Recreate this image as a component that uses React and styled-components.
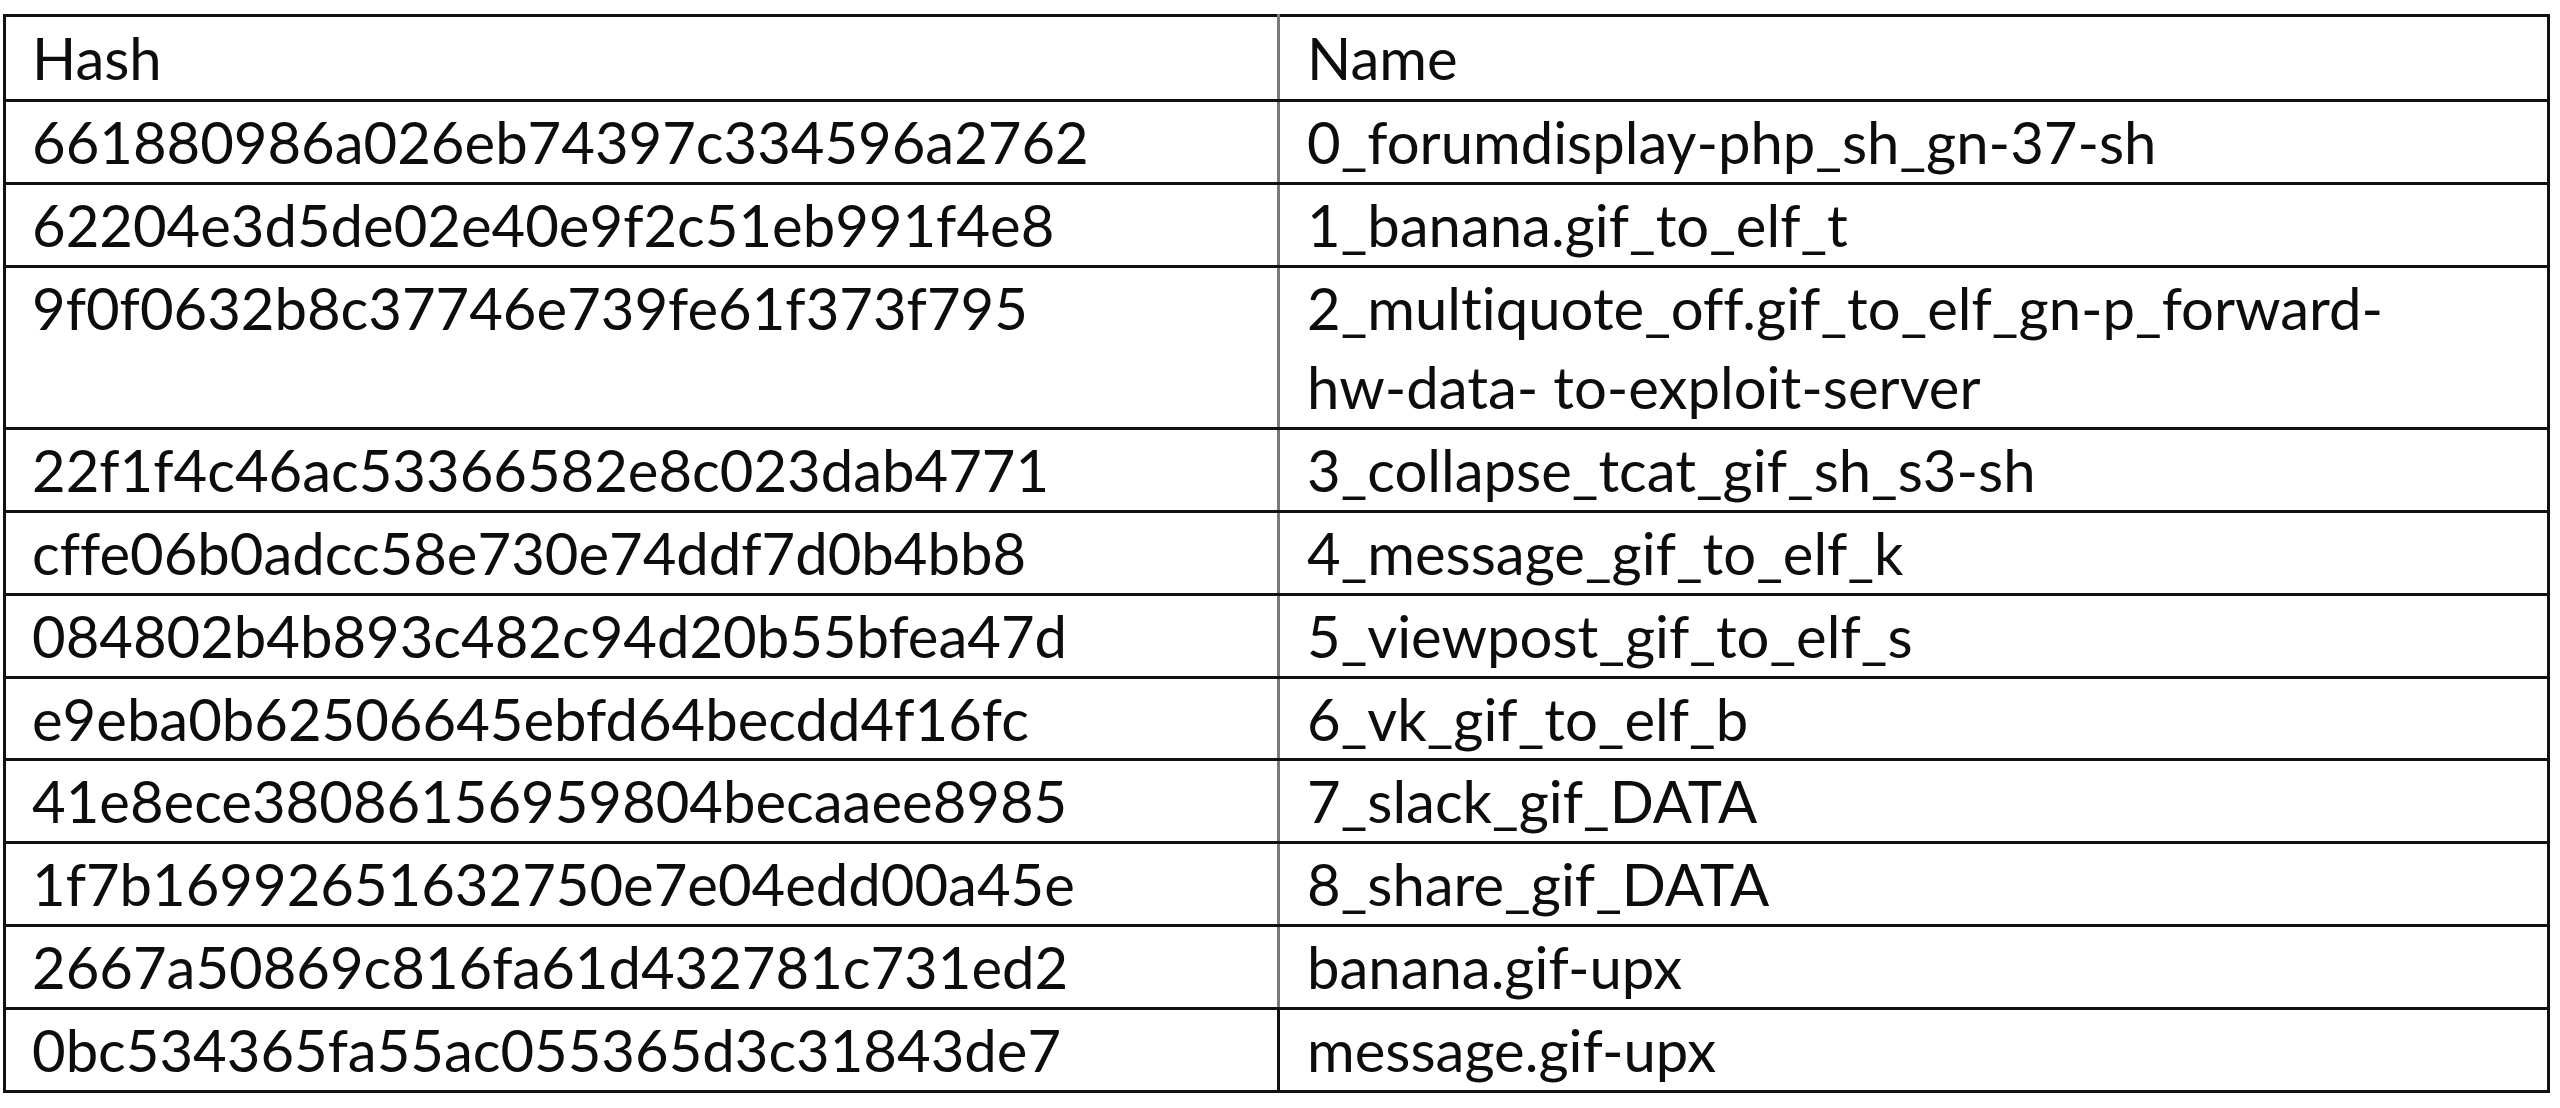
import React from 'react'
import styled, { createGlobalStyle } from 'styled-components'

const GlobalStyle = createGlobalStyle`
  html, body {
    margin: 0;
    padding: 0;
    background: #ffffff;
  }
`

const Page = styled.div`
  padding: 14px 10px 0 3px;
  font-family: Lato, "Open Sans", "Liberation Sans", sans-serif;
  font-variant-ligatures: none;
  color: #0d0d0d;
`

const Table = styled.table`
  width: 2547px;
  border-collapse: collapse;
  table-layout: fixed;
  border: 3px solid #111;
`

const Cell = styled.td`
  font-size: 58px;
  line-height: 79.8px;
  padding: 0 20px 0 ${p => (p.$second ? '27px' : '26px')};
  border-bottom: 3px solid #111;
  border-left: ${p => (p.$second ? `3px solid ${p.$dark ? '#111' : '#7a7a7a'}` : 'none')};
  vertical-align: top;
  text-align: left;
  font-weight: 400;
`

const HeadCell = styled(Cell).attrs({ as: 'th' })`
  line-height: 82px;
`

const rows = [
  ['661880986a026eb74397c334596a2762', '0_forumdisplay-php_sh_gn-37-sh'],
  ['62204e3d5de02e40e9f2c51eb991f4e8', '1_banana.gif_to_elf_t'],
  ['9f0f0632b8c37746e739fe61f373f795', '2_multiquote_off.gif_to_elf_gn-p_forward-\nhw-data- to-exploit-server'],
  ['22f1f4c46ac53366582e8c023dab4771', '3_collapse_tcat_gif_sh_s3-sh'],
  ['cffe06b0adcc58e730e74ddf7d0b4bb8', '4_message_gif_to_elf_k'],
  ['084802b4b893c482c94d20b55bfea47d', '5_viewpost_gif_to_elf_s'],
  ['e9eba0b62506645ebfd64becdd4f16fc', '6_vk_gif_to_elf_b'],
  ['41e8ece38086156959804becaaee8985', '7_slack_gif_DATA'],
  ['1f7b16992651632750e7e04edd00a45e', '8_share_gif_DATA'],
  ['2667a50869c816fa61d432781c731ed2', 'banana.gif-upx'],
  ['0bc534365fa55ac055365d3c31843de7', 'message.gif-upx'],
]

export default function App() {
  return (
    <Page>
      <GlobalStyle />
      <Table>
        <colgroup>
          <col style={{ width: '1274px' }} />
          <col />
        </colgroup>
        <thead>
          <tr>
            <HeadCell>Hash</HeadCell>
            <HeadCell $second>Name</HeadCell>
          </tr>
        </thead>
        <tbody>
          {rows.map(([hash, name], i) => (
            <tr key={hash}>
              <Cell>{hash}</Cell>
              <Cell $second $dark={i === rows.length - 1}>
                {name.split('\n').map((line, j) => (
                  <React.Fragment key={j}>
                    {j > 0 && <br />}
                    {line}
                  </React.Fragment>
                ))}
              </Cell>
            </tr>
          ))}
        </tbody>
      </Table>
    </Page>
  )
}
